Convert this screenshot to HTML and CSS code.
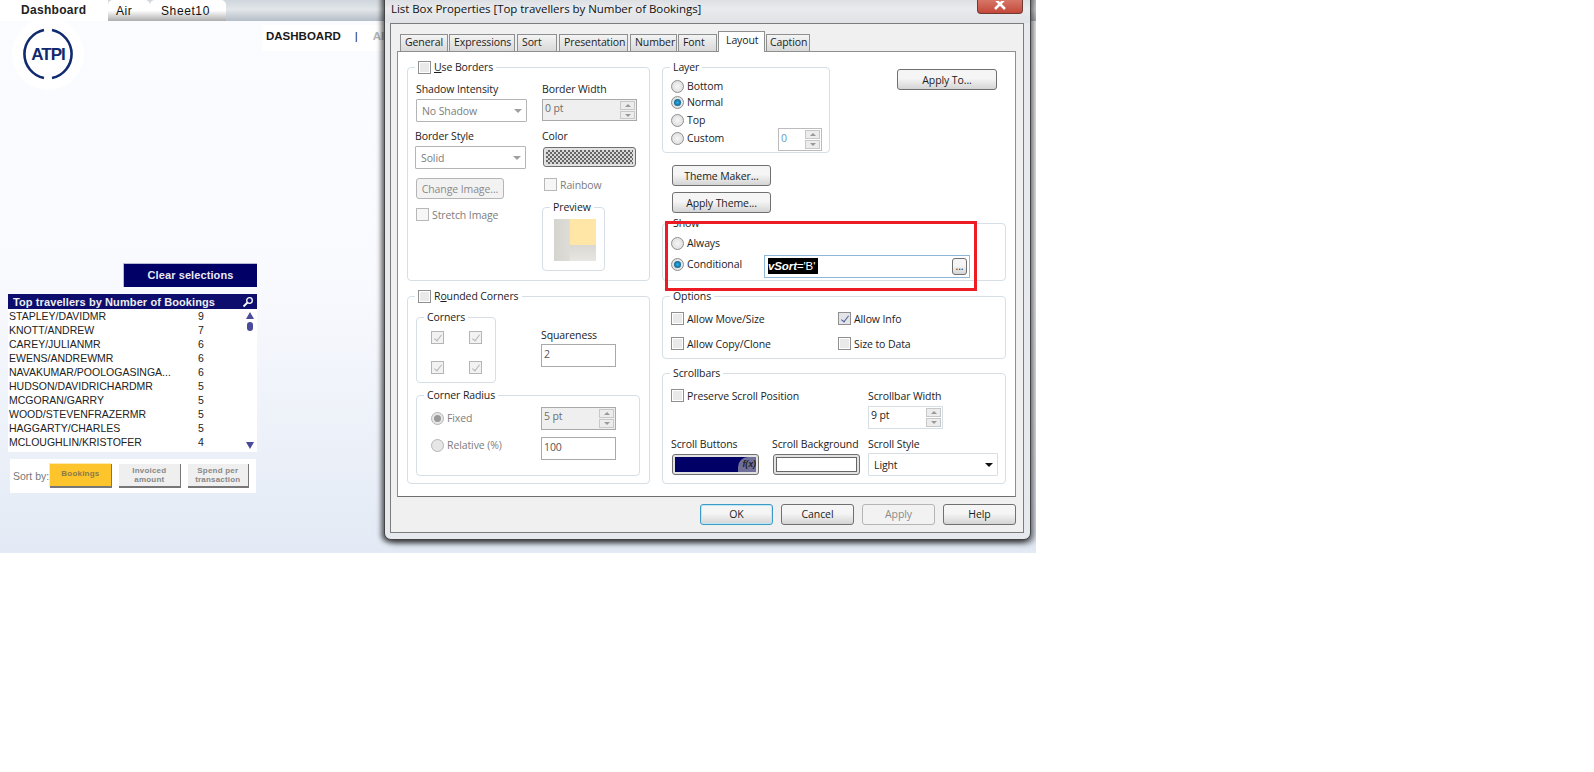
FILE: index.html
```html
<!DOCTYPE html>
<html lang="en">
<head>
    <meta charset="UTF-8">
    <title>List Box Properties</title>
    <link rel="stylesheet" href="styles.css">
</head>
<body>
<div class="app">
    <!-- sheet tabs -->
    <div class="sheet-tabs">
        <div class="sheet-tab active">Dashboard</div>
        <div class="sheet-tab air">Air</div>
        <div class="sheet-tab sheet10">Sheet10</div>
    </div>

    <div class="sheet-head">
        <div class="logo">
            <svg width="72" height="72" viewBox="0 0 72 72">
                <circle cx="36" cy="36" r="36" fill="#fff"/>
                <path d="M32 12 A24.500 24.500 0 0 0 32 60" fill="none" stroke="#0f2a6e" stroke-width="2.600"/>
                <path d="M40 12 A24.500 24.500 0 0 1 40 60" fill="none" stroke="#0f2a6e" stroke-width="2.600"/>
                <text x="36" y="42" class="logo-text" text-anchor="middle">ATPI</text>
            </svg>
        </div>
        <div class="sheet-nav"><b>DASHBOARD</b><span class="nav-sep">|</span><span class="nav-next">AIR</span></div>
    </div>

    <div class="clear-row"><div class="clear-btn">Clear selections</div></div>

    <div class="listbox">
        <div class="listbox-title">
            <span>Top travellers by Number of Bookings</span>
            <svg width="12" height="12" viewBox="0 0 12 12"><circle cx="7.500" cy="4.500" r="2.800" fill="none" stroke="#fff" stroke-width="1.300"/><path d="M5.500 6.500 L1.500 10.500" stroke="#fff" stroke-width="1.800"/></svg>
        </div>
        <div class="listbox-body">
            <div class="rows">
                <div class="row"><span class="name">STAPLEY/DAVIDMR</span><span>9</span></div>
                <div class="row"><span class="name">KNOTT/ANDREW</span><span>7</span></div>
                <div class="row"><span class="name">CAREY/JULIANMR</span><span>6</span></div>
                <div class="row"><span class="name">EWENS/ANDREWMR</span><span>6</span></div>
                <div class="row"><span class="name">NAVAKUMAR/POOLOGASINGA...</span><span>6</span></div>
                <div class="row"><span class="name">HUDSON/DAVIDRICHARDMR</span><span>5</span></div>
                <div class="row"><span class="name">MCGORAN/GARRY</span><span>5</span></div>
                <div class="row"><span class="name">WOOD/STEVENFRAZERMR</span><span>5</span></div>
                <div class="row"><span class="name">HAGGARTY/CHARLES</span><span>5</span></div>
                <div class="row"><span class="name">MCLOUGHLIN/KRISTOFER</span><span>4</span></div>
            </div>
            <div class="list-scroll">
                <div class="scroll-top">
                    <div class="arrow-up"></div>
                    <div class="thumb"></div>
                </div>
                <div class="arrow-down"></div>
            </div>
        </div>
    </div>

    <div class="sort-box">
        <span class="sort-label">Sort by:</span>
        <div class="sort-btn on">Bookings</div>
        <div class="sort-btn">Invoiced<br>amount</div>
        <div class="sort-btn">Spend per<br>transaction</div>
    </div>

    <!-- properties dialog -->
    <div class="dialog">
        <div class="title-bar">
            <span>List Box Properties [Top travellers by Number of Bookings]</span>
            <div class="close-btn"><svg width="12" height="9" viewBox="0 0 12 9"><path d="M1 -2 L11 8 M11 -2 L1 8" stroke="#fff" stroke-width="2.500"/></svg></div>
        </div>
        <div class="dialog-panel">
            <div class="tabs">
                <div class="tab t-general">General</div>
                <div class="tab t-expr">Expressions</div>
                <div class="tab t-sort">Sort</div>
                <div class="tab t-pres">Presentation</div>
                <div class="tab t-num">Number</div>
                <div class="tab t-font">Font</div>
                <div class="tab selected t-layout">Layout</div>
                <div class="tab t-cap">Caption</div>
            </div>
            <div class="page">
                <div class="col-left">
                    <div class="group g-borders">
                        <div class="legend"><i class="cb"></i><span><u>U</u>se Borders</span></div>
                        <div class="borders-a">
                            <label class="lbl">Shadow Intensity</label>
                            <div class="select off s-shadow">No Shadow<i class="caret"></i></div>
                            <label class="lbl bs">Border Style</label>
                            <div class="select off s-style">Solid<i class="caret"></i></div>
                            <div class="btn off b-image">Change Image...</div>
                            <div class="check off stretch"><i class="cb"></i>Stretch Image</div>
                        </div>
                        <div class="borders-b">
                            <label class="lbl">Border Width</label>
                            <div class="spin grey s-width">0 pt<div class="spin-btns"><i class="up"></i><i class="dn"></i></div></div>
                            <label class="lbl color-lbl">Color</label>
                            <div class="swatch s-color"><div class="checker"></div></div>
                            <div class="check off rainbow"><i class="cb"></i>Rainbow</div>
                            <div class="group g-preview">
                                <div class="legend">Preview</div>
                                <div class="preview"><div class="preview-in"></div></div>
                            </div>
                        </div>
                    </div>
                    <div class="group g-rounded">
                        <div class="legend"><i class="cb"></i><span>R<u>o</u>unded Corners</span></div>
                        <div class="rounded-top">
                            <div class="group g-corners">
                                <div class="legend">Corners</div>
                                <div class="corner-grid">
                                    <i class="cb ticked"></i><i class="cb ticked"></i>
                                    <i class="cb ticked"></i><i class="cb ticked"></i>
                                </div>
                            </div>
                            <div class="squareness">
                                <label class="lbl">Squareness</label>
                                <div class="input i-wide">2</div>
                            </div>
                        </div>
                        <div class="group g-radius">
                            <div class="legend">Corner Radius</div>
                            <div class="radius-rows">
                                <div class="radius-row r1">
                                    <div class="radio-line off"><i class="radio dot-grey"></i>Fixed</div>
                                    <div class="spin grey i-wide">5 pt<div class="spin-btns"><i class="up"></i><i class="dn"></i></div></div>
                                </div>
                                <div class="radius-row r2">
                                    <div class="radio-line off"><i class="radio"></i>Relative (%)</div>
                                    <div class="input i-wide">100</div>
                                </div>
                            </div>
                        </div>
                    </div>
                </div>

                <div class="col-right">
                    <div class="layer-row">
                        <div class="group g-layer">
                            <div class="legend">Layer</div>
                            <div class="radio-line l1"><i class="radio"></i>Bottom</div>
                            <div class="radio-line l2"><i class="radio dot"></i>Normal</div>
                            <div class="radio-line l3"><i class="radio"></i>Top</div>
                            <div class="radio-line l4"><i class="radio"></i>Custom</div>
                            <div class="spin s-layer">0<div class="spin-btns"><i class="up"></i><i class="dn"></i></div></div>
                        </div>
                        <div class="btn b-apply-to">Apply To...</div>
                    </div>
                    <div class="btn b-theme">Theme Maker...</div>
                    <div class="btn b-theme b-theme2">Apply Theme...</div>
                    <div class="group g-show">
                        <div class="legend">Show</div>
                        <div class="radio-line s1"><i class="radio"></i>Always</div>
                        <div class="cond-row">
                            <div class="radio-line"><i class="radio dot"></i>Conditional</div>
                            <div class="cond-input"><span class="cond-sel"><b>vSort</b>='B'</span><div class="btn dots">...</div></div>
                        </div>
                    </div>
                    <div class="group g-options">
                        <div class="legend">Options</div>
                        <div class="options-grid">
                            <div class="check"><i class="cb"></i>Allow Move/Size</div>
                            <div class="check"><i class="cb ticked blue"></i>Allow Info</div>
                            <div class="check"><i class="cb"></i>Allow Copy/Clone</div>
                            <div class="check"><i class="cb"></i>Size to Data</div>
                        </div>
                    </div>
                    <div class="group g-scroll">
                        <div class="legend">Scrollbars</div>
                        <div class="scroll-a">
                            <div class="check"><i class="cb"></i>Preserve Scroll Position</div>
                            <div class="sb-width">
                                <label class="lbl">Scrollbar Width</label>
                                <div class="spin i-wide light">9 pt<div class="spin-btns"><i class="up"></i><i class="dn"></i></div></div>
                            </div>
                        </div>
                        <div class="scroll-b">
                            <div class="sb-col c1">
                                <label class="lbl">Scroll Buttons</label>
                                <div class="swatch s-btns"><div class="navy"><em>f(x)</em></div></div>
                            </div>
                            <div class="sb-col c2">
                                <label class="lbl">Scroll Background</label>
                                <div class="swatch s-btns"><div class="blank"></div></div>
                            </div>
                            <div class="sb-col c3">
                                <label class="lbl">Scroll Style</label>
                                <div class="select s-light">Light<i class="caret dark"></i></div>
                            </div>
                        </div>
                    </div>
                </div>
            </div>
            <div class="dialog-buttons">
                <div class="btn wide focus">OK</div>
                <div class="btn wide">Cancel</div>
                <div class="btn wide off">Apply</div>
                <div class="btn wide">Help</div>
            </div>
        </div>
        <div class="red-box"></div>
    </div>
</div>
</body>
</html>
```

FILE: styles.css
```css
/* page */
body {
    margin: 0;
    background: #fff;
    font-family: "Liberation Sans", Arial, sans-serif;
}

.app {
    position: relative;
    width: 1036px;
    height: 553px;
    overflow: hidden;
    background: linear-gradient(#fbfcff 0%, #f9fafe 50%, #e3eaf5 100%);
}

/* sheet tabs */
.sheet-tabs {
    display: flex;
    height: 21px;
    background: linear-gradient(#cfd6dc, #e2e6ea 45%, #b5bdc6);
}

.sheet-tab {
    box-sizing: border-box;
    height: 21px;
    padding-top: 4px;
    font-size: 12px;
    letter-spacing: 0.6px;
    color: #111;
    border-radius: 5px 5px 0 0;
    background: linear-gradient(#fff 50%, #adadad);
}

.sheet-tab.active {
    width: 108px;
    padding: 3px 0 0 21px;
    font-weight: bold;
    letter-spacing: 0.3px;
    color: #222;
    background: #fff;
    border-radius: 0;
}

.sheet-tab.air {
    width: 42px;
    padding-left: 8px;
}

.sheet-tab.sheet10 {
    width: 76px;
    padding-left: 11px;
}

.sheet-head {
    display: flex;
    height: 242px;
}

.logo {
    width: 72px;
    height: 72px;
    margin: 0 0 0 12px;
    line-height: 0;
    transform: translateY(-3px);
}

.logo-text {
    font-family: "Liberation Sans", Arial, sans-serif;
    font-size: 17px;
    font-weight: bold;
    letter-spacing: -1px;
    fill: #0f2a6e;
}

.sheet-nav {
    box-sizing: border-box;
    width: 122px;
    height: 26px;
    margin: 4px 0 0 178px;
    padding: 5px 0 0 4px;
    background: #fff;
    font-size: 11.500px;
    white-space: nowrap;
    color: #1a1a1a;
}

.nav-sep {
    margin: 0 0 0 14px;
}

.nav-next {
    margin-left: 15px;
    font-weight: bold;
    color: #b5b5b5;
}

.clear-row {
    display: flex;
    padding-left: 123px;
}

.clear-btn {
    box-sizing: border-box;
    width: 134px;
    height: 24px;
    line-height: 22px;
    text-align: center;
    font-size: 11px;
    font-weight: bold;
    letter-spacing: 0.1px;
    color: #e8e8f2;
    background: #000066;
    border-top: 1px solid #b8bcd8;
    border-left: 1px solid #b8bcd8;
}

/* list box */
.listbox {
    width: 249px;
    margin: 7px 0 0 8px;
    background: #fff;
}

.listbox-title {
    display: flex;
    justify-content: space-between;
    align-items: center;
    height: 15px;
    padding: 0 3px 0 5px;
    font-size: 11px;
    font-weight: bold;
    letter-spacing: 0.1px;
    color: #eee;
    background: #0d0d6e;
}

.listbox-body {
    display: flex;
    height: 143px;
}

.rows {
    flex: 1;
}

.row {
    display: flex;
    height: 14px;
    line-height: 14px;
    font-size: 10.500px;
    color: #222;
}

.name {
    width: 189px;
    padding-left: 1px;
    white-space: nowrap;
}

.list-scroll {
    display: flex;
    flex-direction: column;
    justify-content: space-between;
    width: 9px;
    padding: 3px 2px 3px 0;
    margin-left: -17px;
}

.arrow-up {
    width: 0;
    height: 0;
    border-left: 4px solid transparent;
    border-right: 4px solid transparent;
    border-bottom: 7px solid #4a4a9a;
}

.arrow-down {
    width: 0;
    height: 0;
    border-left: 4px solid transparent;
    border-right: 4px solid transparent;
    border-top: 7px solid #4a4a9a;
}

.thumb {
    width: 6px;
    height: 9px;
    margin: 3px 0 0 1px;
    border-radius: 3px;
    background: #4a4a9a;
}

/* sort buttons */
.sort-box {
    display: flex;
    align-items: center;
    box-sizing: border-box;
    width: 246px;
    height: 34px;
    margin: 7px 0 0 10px;
    padding-left: 3px;
    background: #fff;
}

.sort-label {
    width: 37px;
    font-size: 10.500px;
    color: #777;
    white-space: nowrap;
}

.sort-btn {
    box-sizing: border-box;
    width: 62px;
    height: 24px;
    margin-right: 7px;
    padding-top: 2px;
    text-align: center;
    font-size: 8px;
    font-weight: bold;
    line-height: 9px;
    letter-spacing: 0.2px;
    color: #888;
    background: #efefef;
    border-right: 1px solid #777;
    border-bottom: 2px solid #777;
}

.sort-btn.on {
    width: 63px;
    margin-right: 7px;
    padding-top: 5px;
    background: #fec42c;
    color: #8a7a4a;
    box-shadow: -1px -1px 0 #fde9b0;
}

/* dialog */
.dialog {
    position: absolute;
    left: 384px;
    top: -14px;
    box-sizing: border-box;
    width: 647px;
    height: 554px;
    background: #e6e9ed;
    border: 1px solid #444;
    border-radius: 7px;
    box-shadow: -3px 2px 5px rgba(0, 0, 0, 0.55), 3px 3px 6px rgba(0, 0, 0, 0.55);
    font-family: "Open Sans", "Liberation Sans", sans-serif;
    font-size: 10.500px;
    letter-spacing: -0.1px;
    color: #1c1c1c;
}

.title-bar {
    display: flex;
    justify-content: space-between;
    height: 36px;
    padding: 14px 7px 0 6px;
    box-sizing: border-box;
    font-size: 11.500px;
    letter-spacing: -0.05px;
    line-height: 16px;
    color: #111;
    background: linear-gradient(#c9ced3, #e9ebee 60%, #dfe2e6);
    border-radius: 7px 7px 0 0;
}

.close-btn {
    display: flex;
    justify-content: center;
    width: 46px;
    height: 27px;
    margin-top: -14px;
    padding-top: 14px;
    box-sizing: border-box;
    background: linear-gradient(#e9a593, #c4483a);
    border: 1px solid #6e3a35;
    border-top: 0;
    border-radius: 0 0 4px 4px;
}

.dialog-panel {
    box-sizing: border-box;
    width: 634px;
    height: 510px;
    margin-left: 5px;
    padding: 10px 7px 0 6px;
    background: #f0f0f0;
    border: 1px solid #7c7c7c;
}

.tabs {
    display: flex;
    height: 17px;
    align-items: flex-end;
}

.tab {
    box-sizing: border-box;
    height: 17px;
    line-height: 15px;
    padding-left: 4px;
    margin-right: 1px;
    white-space: nowrap;
    background: linear-gradient(#f4f4f4, #d9d9d9);
    border: 1px solid #8e8f8f;
    border-bottom: 0;
}

.t-general { width: 48px; margin-left: 3px; }
.t-expr { width: 66px; margin-right: 2px; }
.t-sort { width: 40px; margin-right: 2px; }
.t-pres { width: 69px; margin-right: 2px; }
.t-num { width: 47px; margin-right: 1px; }
.t-font { width: 39px; margin-right: 1px; }
.t-layout { width: 47px; margin-right: 1px; padding-left: 7px; }
.t-cap { width: 44px; padding-left: 3px; }

.tab.selected {
    position: relative;
    height: 21px;
    line-height: 16px;
    background: #fff;
    margin-bottom: -1px;
    z-index: 1;
}

.page {
    display: flex;
    box-sizing: border-box;
    width: 619px;
    height: 446px;
    padding: 15px 0 0 9px;
    background: #fff;
    border: 1px solid #8e8f8f;
    border-bottom-color: #6f6f6f;
}

.col-left {
    width: 243px;
    margin-right: 12px;
}

.col-right {
    width: 345px;
}

.group {
    position: relative;
    box-sizing: border-box;
    border: 1px solid #d5dfe5;
    border-radius: 4px;
}

.legend {
    position: absolute;
    top: -9px;
    left: 7px;
    display: flex;
    align-items: center;
    padding: 0 3px;
    height: 16px;
    line-height: 16px;
    white-space: nowrap;
    background: #fff;
}

.lbl {
    display: block;
    height: 16px;
    line-height: 16px;
    white-space: nowrap;
}

.cb {
    display: block;
    flex: none;
    box-sizing: border-box;
    width: 13px;
    height: 13px;
    border: 1px solid #8e8f8f;
    background: #e9e9e9;
    box-shadow: inset 0 0 0 1px #fff;
}

.legend .cb {
    margin-right: 3px;
}

.cb.ticked {
    position: relative;
    border-color: #b5b5b5;
    box-shadow: none;
    background: #f2f2f2;
}

.cb.ticked::after {
    content: "";
    position: absolute;
    left: 4px;
    top: 1px;
    width: 3px;
    height: 7px;
    border-right: 1.500px solid #b5b5b5;
    border-bottom: 1.500px solid #b5b5b5;
    transform: rotate(38deg);
}

.cb.ticked.blue {
    border-color: #8e8f8f;
    background: #e4e4e8;
}

.cb.ticked.blue::after {
    border-color: #4a5f9a;
}

.check {
    display: flex;
    align-items: center;
    height: 13px;
    gap: 3px;
    white-space: nowrap;
}

.off {
    color: #7d7d7d;
}

.check.off .cb {
    border-color: #b8b8b8;
    box-shadow: none;
    background: #f6f6f6;
}

.radio {
    display: block;
    flex: none;
    position: relative;
    box-sizing: border-box;
    width: 13px;
    height: 13px;
    border: 1px solid #8e8f8f;
    border-radius: 50%;
    background: radial-gradient(circle, #f6f6f6, #d8d8d8);
}

.radio.dot::after,
.radio.dot-grey::after {
    content: "";
    position: absolute;
    left: 2px;
    top: 2px;
    width: 7px;
    height: 7px;
    border-radius: 50%;
    background: radial-gradient(circle, #29b6e8, #0a3f6e);
}

.radio.dot-grey::after {
    background: #999;
}

.radio-line {
    display: flex;
    align-items: center;
    height: 16px;
    gap: 3px;
    white-space: nowrap;
}

.radio-line.off .radio {
    border-color: #b5b5b5;
    background: #e6e6e6;
}

.select {
    position: relative;
    box-sizing: border-box;
    height: 23px;
    padding-left: 5px;
    line-height: 23px;
    background: #fff;
    border: 1px solid #b5b5b5;
    border-radius: 1px;
}

.caret {
    position: absolute;
    right: 4px;
    top: 9px;
    width: 0;
    height: 0;
    border-left: 4px solid transparent;
    border-right: 4px solid transparent;
    border-top: 4px solid #a0a0a0;
}

.caret.dark {
    border-top-color: #111;
}

.spin {
    position: relative;
    box-sizing: border-box;
    height: 23px;
    padding-left: 2px;
    line-height: 17px;
    background: #fff;
    border: 1px solid #a9a9a9;
}

.spin.grey {
    color: #6d6d6d;
    background: #efefef;
}

.spin.light {
    border-color: #d5dfe5;
}

.spin-btns {
    position: absolute;
    right: 1px;
    top: 1px;
    bottom: 1px;
    width: 15px;
    display: flex;
    flex-direction: column;
    gap: 1px;
}

.spin-btns i {
    flex: 1;
    position: relative;
    background: #ececec;
    border: 1px solid #c8c8c8;
}

.spin-btns i::after {
    content: "";
    position: absolute;
    left: 4px;
    top: 2px;
    border-left: 3px solid transparent;
    border-right: 3px solid transparent;
}

.spin-btns .up::after {
    border-bottom: 3px solid #999;
}

.spin-btns .dn::after {
    border-top: 3px solid #999;
}

.input {
    box-sizing: border-box;
    height: 23px;
    padding-left: 2px;
    line-height: 19px;
    color: #555;
    background: #fff;
    border: 1px solid #a9a9a9;
}

.i-wide {
    width: 75px;
}

.btn {
    box-sizing: border-box;
    text-align: center;
    white-space: nowrap;
    background: linear-gradient(#f5f5f5 45%, #d4d4d4);
    border: 1px solid #707070;
    border-radius: 3px;
}

.btn.off {
    color: #8a8a8a;
    background: #f2f2f2;
    border-color: #b5b5b5;
}

.swatch {
    box-sizing: border-box;
    padding: 2px;
    background: #e2e2e2;
    border: 1px solid #707070;
    border-radius: 3px;
}

/* left column */
.g-borders {
    display: flex;
    height: 214px;
    margin-bottom: 15px;
    padding: 13px 0 0 8px;
}

.borders-a {
    width: 126px;
}

.borders-b {
    width: 95px;
}

.s-shadow {
    width: 111px;
    margin-top: 2px;
}

.bs {
    margin: 6px 0 0 -1px;
}

.s-style {
    width: 111px;
    margin: 2px 0 0 -1px;
}

.b-image {
    width: 88px;
    height: 21px;
    line-height: 21px;
    margin-top: 9px;
}

.stretch {
    margin-top: 9px;
}

.s-width {
    height: 22px;
    margin-top: 2px;
}

.color-lbl {
    margin-top: 7px;
}

.s-color {
    width: 93px;
    height: 20px;
    margin: 3px 0 0 1px;
}

.checker {
    height: 14px;
    background-image: repeating-conic-gradient(#666 0 25%, #d8d8d8 0 50%);
    background-size: 4px 4px;
}

.rainbow {
    margin: 11px 0 0 2px;
}

.g-preview {
    width: 63px;
    height: 64px;
    margin-top: 16px;
    padding: 11px 0 0 11px;
}

.preview {
    width: 42px;
    height: 42px;
    background:
        linear-gradient(#dad8d2, #e8e6e2) 16px 26px / 26px 16px no-repeat,
        linear-gradient(90deg, #d6d4ce, #eceae6);
}

.preview-in {
    width: 26px;
    height: 26px;
    margin-left: 16px;
    background: #ffe6a6;
}

.g-rounded {
    height: 188px;
    padding: 20px 0 0 8px;
}

.rounded-top {
    display: flex;
    height: 66px;
}

.g-corners {
    width: 80px;
    height: 66px;
    margin-right: 45px;
}

.corner-grid {
    display: grid;
    grid-template-columns: 13px 13px;
    grid-template-rows: 13px 13px;
    gap: 17px 25px;
    padding: 13px 0 0 14px;
}

.squareness {
    padding-top: 10px;
}

.squareness .input {
    margin-top: 1px;
}

.g-radius {
    width: 224px;
    height: 81px;
    margin-top: 12px;
}

.radius-rows {
    padding: 11px 0 0 14px;
}

.radius-row {
    display: flex;
    justify-content: space-between;
    align-items: flex-start;
    padding-right: 23px;
}

.r2 {
    margin-top: 7px;
}

.r1 .radio-line {
    margin-top: 3px;
}

/* right column */
.layer-row {
    display: flex;
    align-items: flex-start;
}

.g-layer {
    width: 168px;
    height: 86px;
    margin-right: 67px;
    padding: 10px 0 0 8px;
}

.l3 { margin-top: 2px; }
.l4 { margin-top: 2px; }

.s-layer {
    position: absolute;
    left: 115px;
    top: 60px;
    width: 44px;
    line-height: 19px;
    color: #6a9ac0;
    border-color: #bcbcbc;
}

.b-apply-to {
    width: 100px;
    height: 21px;
    line-height: 21px;
    margin-top: 2px;
}

.b-theme {
    width: 99px;
    height: 21px;
    line-height: 21px;
    margin: 12px 0 0 10px;
}

.b-theme2 {
    margin-top: 6px;
}

.g-show {
    width: 344px;
    height: 58px;
    margin-top: 10px;
    padding: 11px 0 0 8px;
}

.cond-row {
    display: flex;
    align-items: flex-start;
    margin-top: 0;
}

.cond-row .radio-line {
    width: 93px;
    margin-top: 5px;
}

.cond-input {
    position: relative;
    box-sizing: border-box;
    width: 206px;
    height: 23px;
    margin-top: 4px;
    padding: 2px 0 0 3px;
    background: #fff;
    border: 1px solid #8fb8d8;
}

.cond-sel {
    display: block;
    width: 50px;
    height: 16px;
    line-height: 16px;
    font-family: "Liberation Sans", Arial, sans-serif;
    font-size: 11.500px;
    letter-spacing: -0.1px;
    color: #fff;
    background: #000;
    white-space: nowrap;
}

.cond-sel b {
    font-style: italic;
}

.dots {
    position: absolute;
    right: 2px;
    top: 2px;
    width: 15px;
    height: 17px;
    line-height: 14px;
}

.g-options {
    width: 344px;
    height: 63px;
    margin-top: 15px;
}

.options-grid {
    display: grid;
    grid-template-columns: 167px 1fr;
    row-gap: 12px;
    padding: 15px 0 0 8px;
}

.g-scroll {
    width: 344px;
    height: 111px;
    margin-top: 14px;
    padding: 15px 0 0 8px;
}

.scroll-a {
    display: flex;
}

.scroll-a .check {
    width: 197px;
}

.sb-width {
    margin-top: -1px;
}

.sb-width .spin {
    margin-top: 2px;
}

.scroll-b {
    display: flex;
    margin-top: 7px;
}

.sb-col {
    flex: none;
}

.c1 { width: 101px; }
.c2 { width: 96px; }

.s-btns {
    width: 87px;
    height: 21px;
    margin: 2px 0 0 1px;
}

.navy {
    position: relative;
    height: 15px;
    overflow: hidden;
    background: #000066;
}

.navy em {
    position: absolute;
    right: 0;
    top: 0;
    width: 18px;
    height: 15px;
    line-height: 15px;
    font-family: "Liberation Sans", Arial, sans-serif;
    font-size: 9px;
    font-weight: bold;
    text-align: right;
    color: #222;
    background: #6f6f9a;
    border-radius: 10px 0 0 0;
}

.blank {
    height: 15px;
    background: #fff;
    border: 1px solid #666;
    box-sizing: border-box;
}

.s-light {
    width: 130px;
    border-color: #d5dfe5;
    margin-top: 1px;
}

.dialog-buttons {
    display: flex;
    justify-content: flex-end;
    gap: 8px;
    padding: 7px 0 0;
}

.btn.wide {
    width: 73px;
    height: 21px;
    line-height: 19px;
}

.btn.focus {
    border-color: #3c9cc8;
    box-shadow: inset 0 0 0 1px #bfe6f5;
}

.red-box {
    position: absolute;
    left: 280px;
    top: 234px;
    box-sizing: border-box;
    width: 312px;
    height: 70px;
    border: 3px solid #ed1c24;
}
```
